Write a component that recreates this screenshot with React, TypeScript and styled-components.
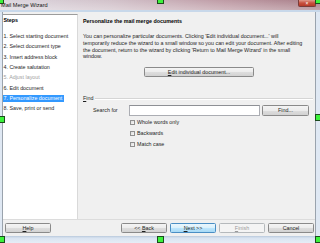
import { FC } from "react";
import styled, { createGlobalStyle } from "styled-components";

const GlobalStyle = createGlobalStyle`
  html, body {
    margin: 0;
    padding: 0;
    background: #ffffff;
  }
  body {
    font-family: "Liberation Sans", Arial, sans-serif;
  }
`;

const Window = styled.div`
  position: relative;
  width: 320px;
  height: 243px;
  overflow: hidden;
  display: flex;
  flex-direction: column;
  background: #dfe8f3;
  font-size: 5.35px;
  color: #1e1e1e;
`;

const TitleBar = styled.div`
  flex: none;
  height: 10px;
  display: flex;
  align-items: flex-start;
  background: linear-gradient(180deg, rgba(255, 255, 255, 0) 0%, rgba(255, 255, 255, 0.3) 100%),
    linear-gradient(90deg, #dcd7df 0%, #d2c2ca 35%, #bf9ca6 70%, #a87e88 100%);
  border-bottom: 2px solid #c8d8ea;
`;

const Title = styled.span`
  margin-left: 1px;
  line-height: 10px;
  font-size: 5.6px;
  color: #151515;
  white-space: nowrap;
`;

const CloseButton = styled.span`
  margin-left: auto;
  margin-right: 4px;
  width: 16px;
  height: 6px;
  display: flex;
  align-items: center;
  justify-content: center;
  background: linear-gradient(180deg, #e09a8c 0%, #c8503e 50%, #b73a28 100%);
  border: 1px solid #7a3c3a;
  border-top: none;
  border-radius: 0 0 2px 2px;
  color: #fff;
  font-size: 5px;
  line-height: 1;
`;

const Body = styled.div`
  flex: 1;
  display: flex;
  flex-direction: column;
  margin: 0 4px 0 2px;
  background: #f0f0f0;
  border-left: 1px solid #9aa3ad;
  border-right: 1px solid #9aa3ad;
  min-height: 0;
`;

const Content = styled.div`
  flex: 1;
  display: flex;
  min-height: 0;
`;

const Sidebar = styled.div`
  width: 74px;
  margin-top: 2px;
  background: #ffffff;
  border-top: 1px solid #9c9c9c;
  border-right: 1px solid #d9d9d9;
  padding-top: 2.2px;
`;

const SideHeader = styled.div`
  height: 7px;
  line-height: 7px;
  padding-left: 0.5px;
  font-weight: bold;
  color: #000;
  margin-bottom: 9px;
`;

const StepList = styled.div`
  display: flex;
  flex-direction: column;
  align-items: flex-start;
  gap: 3.3px;
`;

const Step = styled.div<{ $active?: boolean; $disabled?: boolean }>`
  height: 7px;
  line-height: 7px;
  padding: 0 2px 0 0.5px;
  white-space: nowrap;
  color: ${(p) => (p.$active ? "#ffffff" : p.$disabled ? "#a0a0a0" : "#1e1e1e")};
  background: ${(p) => (p.$active ? "#3399ff" : "transparent")};
`;

const Main = styled.div`
  flex: 1;
  display: flex;
  flex-direction: column;
  padding: 5.5px 2px 0 5px;
`;

const Heading = styled.div`
  height: 7px;
  line-height: 7px;
  font-weight: bold;
  color: #000;
  margin-bottom: 8.8px;
`;

const Paragraph = styled.p`
  margin: 0;
  line-height: 6.7px;
  white-space: nowrap;
`;

const Button = styled.button<{ $width?: number; $primary?: boolean; $disabled?: boolean }>`
  flex: none;
  width: ${(p) => p.$width ?? 46}px;
  height: 10px;
  padding: 0;
  font-family: inherit;
  font-size: 5.35px;
  line-height: 8px;
  border-radius: 1.5px;
  border: 1px solid ${(p) => (p.$primary ? "#4a8ec4" : p.$disabled ? "#b5b9bc" : "#8a8a8a")};
  color: ${(p) => (p.$disabled ? "#9a9a9a" : "#1e1e1e")};
  background: ${(p) =>
    p.$primary
      ? "linear-gradient(180deg, #eaf6fd 0%, #d9f0fc 50%, #bee6fd 51%, #a7d9f5 100%)"
      : p.$disabled
      ? "#f4f4f4"
      : "linear-gradient(180deg, #f4f4f4 0%, #ececec 50%, #dedede 51%, #d2d2d2 100%)"};
  u {
    text-decoration-thickness: 0.5px;
  }
`;

const EditButton = styled(Button)`
  margin: 6.8px 0 0 61px;
`;

const FindGroup = styled.div`
  margin-top: 18.5px;
  display: flex;
  align-items: center;
  gap: 2px;
  height: 7px;
`;

const GroupLabel = styled.span`
  line-height: 7px;
`;

const GroupLine = styled.span`
  flex: 1;
  height: 0;
  border-top: 1px solid #d5d5d5;
  border-bottom: 1px solid #ffffff;
`;

const SearchRow = styled.div`
  margin-top: 2.5px;
  display: flex;
  align-items: center;
  height: 11px;
  padding-left: 10px;
`;

const SearchLabel = styled.span`
  width: 36px;
`;

const SearchInput = styled.input`
  width: 131px;
  height: 11px;
  box-sizing: border-box;
  padding: 0;
  border: 1px solid #abadb3;
  border-top-color: #8e9095;
  background: #ffffff;
  outline: none;
`;

const FindButton = styled(Button)`
  margin-left: 2px;
  height: 11px;
`;

const Options = styled.div`
  margin: 3.5px 0 0 47px;
  display: flex;
  flex-direction: column;
  gap: 3.7px;
`;

const Option = styled.label`
  display: flex;
  align-items: center;
  gap: 2px;
  height: 7px;
  line-height: 7px;
`;

const Box = styled.span`
  width: 5px;
  height: 5px;
  box-sizing: border-box;
  border: 1px solid #8f8f8f;
  background: linear-gradient(135deg, #dcdcdc, #f8f8f8);
`;

const Footer = styled.div`
  flex: none;
  height: 17px;
  box-sizing: border-box;
  border-top: 1px solid #dcdcdc;
  display: flex;
  align-items: flex-start;
  padding: 3px 1px 0 2px;
`;

const ButtonGroup = styled.div`
  margin-left: auto;
  display: flex;
  gap: 3px;
`;

const BottomFrame = styled.div`
  flex: none;
  height: 7px;
  background: linear-gradient(180deg, #b9c9dc 0%, #d9e4f1 30%, #e6edf6 100%);
`;

const Handle = styled.span<{ $x: number; $y: number }>`
  position: absolute;
  left: ${(p) => p.$x}px;
  top: ${(p) => p.$y}px;
  width: 7px;
  height: 7px;
  box-sizing: border-box;
  background: #3cf23c;
  border: 1px solid #1d4a1d;
`;

const steps = [
  "1. Select starting document",
  "2. Select document type",
  "3. Insert address block",
  "4. Create salutation",
  "5. Adjust layout",
  "6. Edit document",
  "7. Personalize document",
  "8. Save, print or send",
];

const handles: [number, number][] = [
  [-3, -3],
  [157, -3],
  [315, -3],
  [-2, 116],
  [315, 114],
  [-2, 236],
  [157, 236],
  [315, 236],
];

const App: FC = () => {
  return (
    <>
      <GlobalStyle />
      <Window>
        <TitleBar>
          <Title>Mail Merge Wizard</Title>
          <CloseButton>×</CloseButton>
        </TitleBar>
        <Body>
          <Content>
            <Sidebar>
              <SideHeader>Steps</SideHeader>
              <StepList>
                {steps.map((s, i) => (
                  <Step key={s} $active={i === 6} $disabled={i === 4}>
                    {s}
                  </Step>
                ))}
              </StepList>
            </Sidebar>
            <Main>
              <Heading>Personalize the mail merge documents</Heading>
              <Paragraph>
                You can personalize particular documents. Clicking 'Edit individual document...' will
                <br />
                temporarily reduce the wizard to a small window so you can edit your document. After editing
                <br />
                the document, return to the wizard by clicking 'Return to Mail Merge Wizard' in the small
                <br />
                window.
              </Paragraph>
              <EditButton $width={110}>
                <u>E</u>dit individual document...
              </EditButton>
              <FindGroup>
                <GroupLabel>
                  <u>F</u>ind
                </GroupLabel>
                <GroupLine />
              </FindGroup>
              <SearchRow>
                <SearchLabel>Search for</SearchLabel>
                <SearchInput />
                <FindButton $width={47}>Find...</FindButton>
              </SearchRow>
              <Options>
                <Option>
                  <Box />
                  Whole words only
                </Option>
                <Option>
                  <Box />
                  Backwards
                </Option>
                <Option>
                  <Box />
                  Match case
                </Option>
              </Options>
            </Main>
          </Content>
          <Footer>
            <Button>
              <u>H</u>elp
            </Button>
            <ButtonGroup>
              <Button>
                &lt;&lt; <u>B</u>ack
              </Button>
              <Button $primary>
                <u>N</u>ext &gt;&gt;
              </Button>
              <Button $disabled>
                <u>F</u>inish
              </Button>
              <Button>Cancel</Button>
            </ButtonGroup>
          </Footer>
        </Body>
        <BottomFrame />
        {handles.map(([x, y]) => (
          <Handle key={`${x}-${y}`} $x={x} $y={y} />
        ))}
      </Window>
    </>
  );
};

export default App;
